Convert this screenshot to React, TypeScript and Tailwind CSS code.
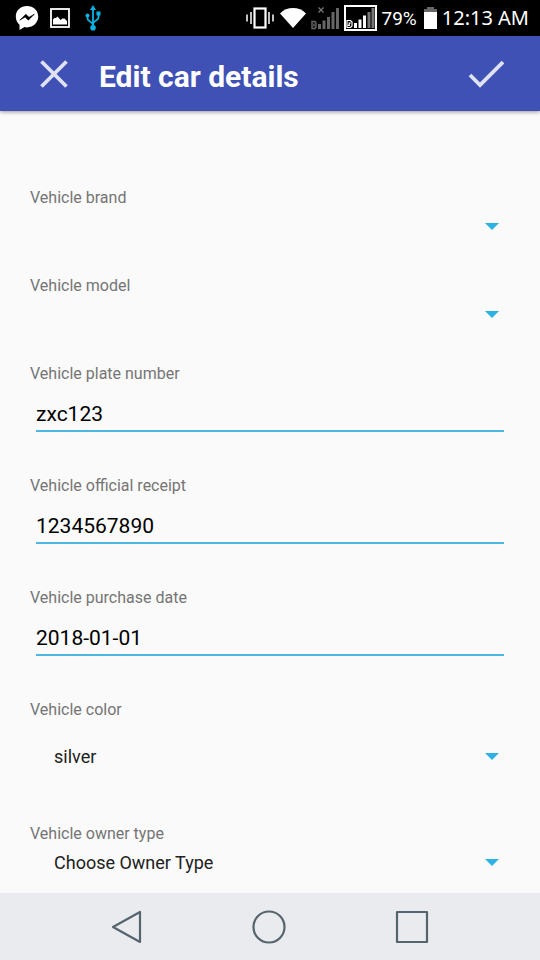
import { useState } from "react";

type Option = { value: string; label: string };

function MessengerIcon() {
  return (
    <svg width="24" height="26" viewBox="0 0 24 26" aria-hidden="true">
      <path d="M12 1C5.6 1 .8 5.5.8 11.6c0 3.500 1.500 6.300 3.700 8.200V25l5-2.900c.8.200 1.600.3 2.500.3 6.400 0 11.200-4.700 11.200-10.800S18.400 1 12 1z" fill="#fff" />
      <path d="M4.800 15.200l6-6 3.200 3.100 5.300-3.100-6 6-3.200-3.100z" fill="#000" stroke="#000" strokeWidth=".6" />
    </svg>
  );
}

function PictureIcon() {
  return (
    <svg width="20" height="20" viewBox="0 0 20 20" aria-hidden="true">
      <rect x="1" y="1" width="18" height="18" fill="none" stroke="#fff" strokeWidth="1.800" />
      <path d="M3 16.500v-5l1.500-1.500 1.500 0 1.500-1.500 3 3.500 2-1.500h2l2.500 2.500v3.500z" fill="#fff" />
    </svg>
  );
}

function UsbIcon() {
  return (
    <svg width="16" height="26" viewBox="0 0 16 26" aria-hidden="true">
      <g fill="none" stroke="#09b3e4" strokeWidth="1.800">
        <path d="M8 4v18" />
        <path d="M2.500 11v2.500c0 3 5.500 3.500 5.500 6.500" />
        <path d="M13.500 9v3.500c0 3-5.500 3.500-5.500 6.500" />
      </g>
      <g fill="#09b3e4">
        <path d="M8 0l3 5H5z" />
        <circle cx="8" cy="22.800" r="2.800" />
        <circle cx="2.500" cy="10.500" r="2" />
        <rect x="11.500" y="6.500" width="4" height="4" />
      </g>
    </svg>
  );
}

function VibrateIcon() {
  return (
    <svg width="28" height="22" viewBox="0 0 28 22" aria-hidden="true">
      <rect x="8.500" y="1.500" width="11" height="19" fill="none" stroke="#fff" strokeWidth="2.200" />
      <path d="M5 5v12M1 7.500v7M23 5v12M27 7.500v7" stroke="#fff" strokeWidth="1.500" />
    </svg>
  );
}

function WifiIcon() {
  return (
    <svg width="26" height="22" viewBox="0 0 26 22" aria-hidden="true">
      <path d="M0 6.500C7-.8 19-.8 26 6.500L13 21z" fill="#fff" />
    </svg>
  );
}

function NoSignalIcon() {
  return (
    <svg width="28" height="24" viewBox="0 0 28 24" aria-hidden="true">
      <path d="M7.500 1.500l5 5M12.500 1.500l-5 5" stroke="#777" strokeWidth="1.300" />
      <path d="M1 15.500h3l1 1.500v4l-1 1.500H1zM3 17.500v3" fill="none" stroke="#666" strokeWidth="1.400" />
      <path d="M7 18h3v5H7zM11.500 14.500h3V23h-3zM16 11h3v12h-3zM20.500 6h3v17h-3zM25 2h3v21h-3z" fill="#666" />
    </svg>
  );
}

function SignalIcon() {
  return (
    <svg width="33" height="26" viewBox="0 0 33 26" aria-hidden="true">
      <rect x="1" y="1" width="31" height="24" fill="none" stroke="#fff" strokeWidth="2" />
      <path d="M3 15.500h3.500l1.500 1.500v4l-1.500 1.500H3zM4.500 18h1.500l-1.500 2.500h1.500" fill="none" stroke="#fff" strokeWidth="1.200" />
      <path d="M10 18h3v5h-3zM14.500 14.500h3V23h-3zM19 10.500h3V23h-3z" fill="#fff" />
      <path d="M23.500 7h3v16h-3zM27.500 3h3v20h-3z" fill="#777" />
    </svg>
  );
}

function BatteryIcon() {
  return (
    <svg width="13" height="22" viewBox="0 0 13 22" aria-hidden="true">
      <path d="M3 0h7v2h3v4H0V2h3z" fill="#666" />
      <path d="M0 5h13v17H0z" fill="#fff" />
    </svg>
  );
}

function StatusBar() {
  return (
    <div className="flex h-9 items-center justify-between bg-black pr-[11px] pl-[15px] text-white">
      <div className="flex items-center">
        <MessengerIcon />
        <span className="ml-[11px]"><PictureIcon /></span>
        <span className="ml-[15px]"><UsbIcon /></span>
      </div>
      <div className="flex items-center">
        <VibrateIcon />
        <span className="ml-1.5"><WifiIcon /></span>
        <span className="ml-[5px]"><NoSignalIcon /></span>
        <span className="ml-[5px]"><SignalIcon /></span>
        <span className="ml-1 pt-0.5 text-[19px] leading-9">79%</span>
        <span className="ml-[7px]"><BatteryIcon /></span>
        <span className="ml-[5px] font-['Noto_Sans',sans-serif] text-[20px] leading-9">12:13 AM</span>
      </div>
    </div>
  );
}

function Header() {
  return (
    <header className="z-10 flex h-[75px] items-center bg-[#3f51b5] pr-9 pl-10 text-white shadow-[0_1px_4px_rgba(0,0,0,0.4)]">
      <button type="button" aria-label="Close">
        <svg width="28" height="28" viewBox="0 0 28 28" aria-hidden="true">
          <path d="M1.500 1.500l25 25M26.500 1.500l-25 25" stroke="#dfe2f3" strokeWidth="3.800" />
        </svg>
      </button>
      <h1 className="ml-[31px] flex-1 pt-1.5 text-[30px] leading-9 font-bold">Edit car details</h1>
      <button type="button" aria-label="Save">
        <svg width="36" height="28" viewBox="0 0 36 28" aria-hidden="true">
          <path d="M2 15l10 10L35 2" fill="none" stroke="#dfe2f3" strokeWidth="3.800" />
        </svg>
      </button>
    </header>
  );
}

function TextField({ id, label, initial }: { id: string; label: string; initial: string }) {
  const [value, setValue] = useState(initial);
  return (
    <div className="flex flex-col pb-3">
      <label htmlFor={id} className="text-[16px] leading-5 text-[#757575]">{label}</label>
      <input
        id={id}
        type="text"
        value={value}
        onChange={(e) => setValue(e.target.value)}
        className="mx-1.5 h-12 border-b-2 border-[#4db8e2] bg-transparent pt-3.5 text-[21px] text-black outline-none"
      />
    </div>
  );
}

function SelectField({ id, label, options, tall }: { id: string; label: string; options: Option[]; tall?: boolean }) {
  const [value, setValue] = useState(options[0].value);
  return (
    <div className="flex flex-col">
      <label htmlFor={id} className="text-[16px] leading-5 text-[#757575]">{label}</label>
      <div className={tall ? "grid h-18 items-center" : "grid h-9 items-center"}>
        <select
          id={id}
          value={value}
          onChange={(e) => setValue(e.target.value)}
          className="col-start-1 row-start-1 h-9 w-full appearance-none bg-transparent pl-6 text-[18px] text-[#212121] outline-none"
        >
          {options.map((o) => (
            <option key={o.value} value={o.value}>{o.label}</option>
          ))}
        </select>
        <svg width="14" height="7" viewBox="0 0 14 7" className="pointer-events-none col-start-1 row-start-1 mr-[11px] justify-self-end" aria-hidden="true">
          <path d="M0 0h14L7 7z" fill="#2db2e5" />
        </svg>
      </div>
    </div>
  );
}

function NavigationBar() {
  return (
    <nav className="flex h-[67px] items-center justify-center gap-[109px] bg-[#e9ebee]">
      <button type="button" aria-label="Back">
        <svg width="32" height="34" viewBox="0 0 32 34" fill="none" stroke="#56646e" strokeWidth="2.200" strokeLinejoin="round" aria-hidden="true">
          <path d="M29 2v30L2 17z" />
        </svg>
      </button>
      <button type="button" aria-label="Home">
        <svg width="34" height="34" viewBox="0 0 34 34" fill="none" stroke="#56646e" strokeWidth="2.200" aria-hidden="true">
          <circle cx="17" cy="17" r="15.500" />
        </svg>
      </button>
      <button type="button" aria-label="Recent apps">
        <svg width="34" height="34" viewBox="0 0 34 34" fill="none" stroke="#56646e" strokeWidth="2.200" strokeLinejoin="round" aria-hidden="true">
          <rect x="2" y="2" width="30" height="30" />
        </svg>
      </button>
    </nav>
  );
}

export default function App() {
  return (
    <div className="flex min-h-screen flex-col bg-[#fafafa] font-[Roboto,sans-serif]">
      <StatusBar />
      <Header />
      <main className="flex-1">
        <form className="flex flex-col gap-8 px-[30px] pt-[77px]">
          <SelectField id="brand" label="Vehicle brand" options={[{ value: "", label: "" }]} />
          <SelectField id="model" label="Vehicle model" options={[{ value: "", label: "" }]} />
          <TextField id="plate" label="Vehicle plate number" initial="zxc123" />
          <TextField id="receipt" label="Vehicle official receipt" initial="1234567890" />
          <TextField id="purchase" label="Vehicle purchase date" initial="2018-01-01" />
          <SelectField id="color" label="Vehicle color" options={[{ value: "silver", label: "silver" }]} tall />
          <SelectField id="owner" label="Vehicle owner type" options={[{ value: "", label: "Choose Owner Type" }]} />
        </form>
      </main>
      <NavigationBar />
    </div>
  );
}
